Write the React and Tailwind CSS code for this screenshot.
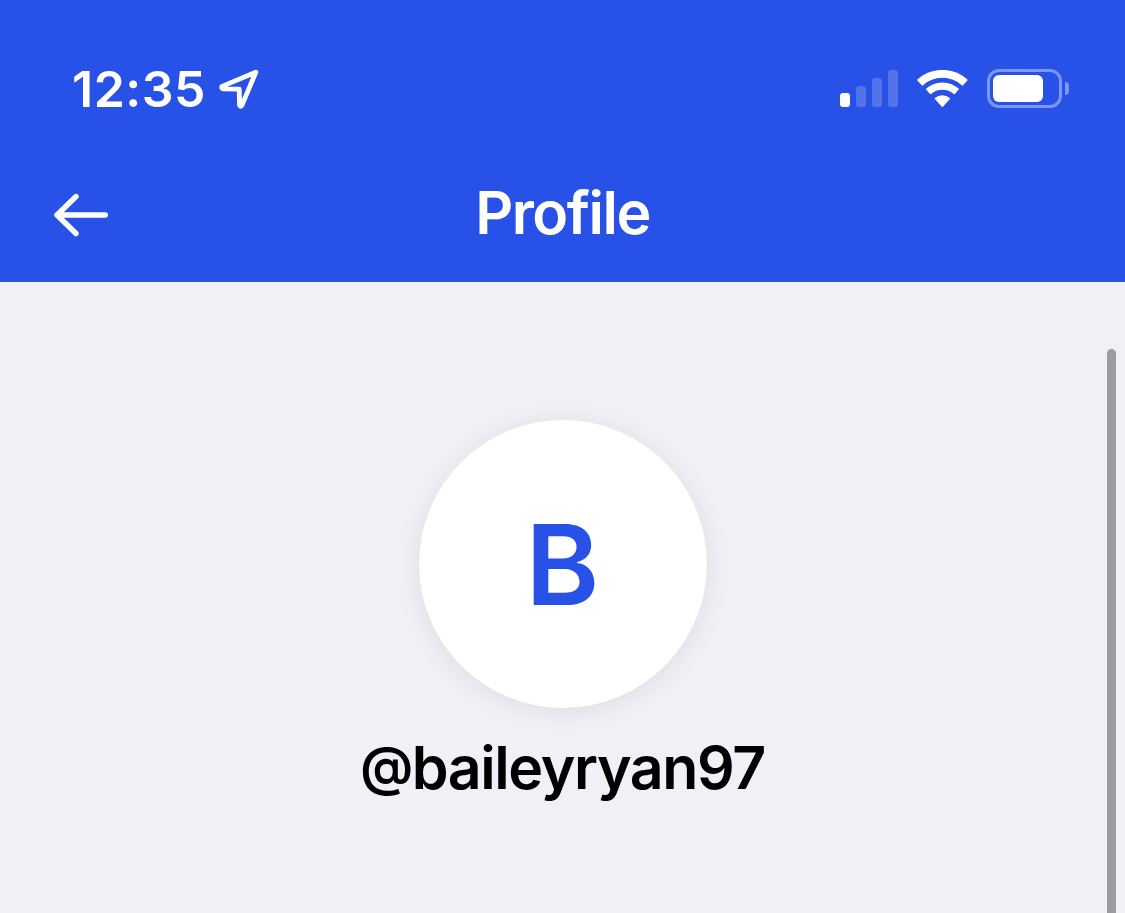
const SignalIcon = () => (
  <div className="flex items-end gap-[6px] h-[37px] mb-[2px]">
    <span className="w-[10px] h-[14px] rounded-[3px] bg-white" />
    <span className="w-[10px] h-[21px] rounded-[3px] bg-white/20" />
    <span className="w-[10px] h-[29px] rounded-[3px] bg-white/20" />
    <span className="w-[10px] h-[37px] rounded-[3px] bg-white/20" />
  </div>
);

const WifiIcon = () => (
  <svg
    width="52"
    height="38"
    viewBox="0 0 52 38"
    fill="white"
    stroke="white"
    strokeWidth="1.4"
    strokeLinejoin="round"
  >
    <path d="M1.9 10A36.6 36.6 0 0 1 50.9 10L46.5 14.9A30 30 0 0 0 6.3 14.9Z" />
    <path d="M10.7 19.1A24 24 0 0 1 42.1 19.1L38.3 23.5A18.2 18.2 0 0 0 14.5 23.5Z" />
    <path d="M19.4 28.5A11 11 0 0 1 33.4 28.5L26.4 36.3Z" />
  </svg>
);

const BatteryIcon = () => (
  <div className="flex items-center gap-[3px] mb-[2px]">
    <div className="w-[75px] h-[39px] rounded-[12px] border-[3px] border-white/40 p-[3px]">
      <div className="w-[50px] h-[27px] rounded-[6px] bg-white" />
    </div>
    <div className="w-[4px] h-[13px] rounded-r-full bg-white/40" />
  </div>
);

const StatusBar = () => (
  <div className="flex items-center justify-between h-[178px] pl-[72px] pr-[56px]">
    <div className="flex items-center">
      <span className="w-[147px] text-[50px] leading-[60px] font-semibold tracking-[0.5px]">
        12:35
      </span>
      <svg
        width="40"
        height="40"
        viewBox="0 0 40 40"
        fill="none"
        stroke="white"
        strokeWidth="4.8"
        strokeLinejoin="round"
      >
        <path d="M36.8 3.2L3 17.4Q2.2 19.6 4 19.8L20.2 20.2L20.6 36.4Q21.4 38.4 22.8 36.6Z" />
      </svg>
    </div>
    <div className="flex items-center">
      <SignalIcon />
      <div className="ml-[18px] mr-[19px]">
        <WifiIcon />
      </div>
      <BatteryIcon />
    </div>
  </div>
);

const NavBar = () => (
  <div className="grid grid-cols-[1fr_auto_1fr] items-center h-[70px] px-[53px]">
    <svg
      className="mt-1"
      width="56"
      height="46"
      viewBox="0 0 56 46"
      fill="none"
      stroke="white"
      strokeWidth="5.4"
      strokeLinecap="round"
      strokeLinejoin="round"
    >
      <path d="M52.3 23H4M23 4.5L4 23L23 41.5" />
    </svg>
    <h1 className="text-[59px] leading-[70px] font-semibold tracking-[-1.5px]">Profile</h1>
    <span />
  </div>
);

const Avatar = ({ letter }) => (
  <div className="flex items-center justify-center size-[288px] rounded-full bg-white shadow-[0_3px_24px_rgba(40,35,60,0.09)]">
    <span className="text-[112px] leading-none font-semibold text-[#2751e7]">{letter}</span>
  </div>
);

const App = () => {
  return (
    <div className="flex flex-col w-[1125px] h-[913px] overflow-hidden bg-[#f0f0f6] font-['Inter',sans-serif]">
      <header className="h-[282px] shrink-0 bg-[#2751e7] text-white">
        <StatusBar />
        <NavBar />
      </header>

      <main className="relative flex flex-col items-center flex-1 pt-[138px]">
        <Avatar letter="B" />
        <p className="mt-[24px] text-[59px] leading-[72px] font-semibold tracking-[-1.4px] text-black">
          <span className="inline-block -translate-y-[4px] text-[53px] leading-none">@</span>
          baileyryan97
        </p>
        {/* scroll indicator */}
        <div className="absolute top-[67px] bottom-0 right-[9px] w-[9px] rounded-t-full bg-[#9c9ca1]" />
      </main>
    </div>
  );
};

export default App;
